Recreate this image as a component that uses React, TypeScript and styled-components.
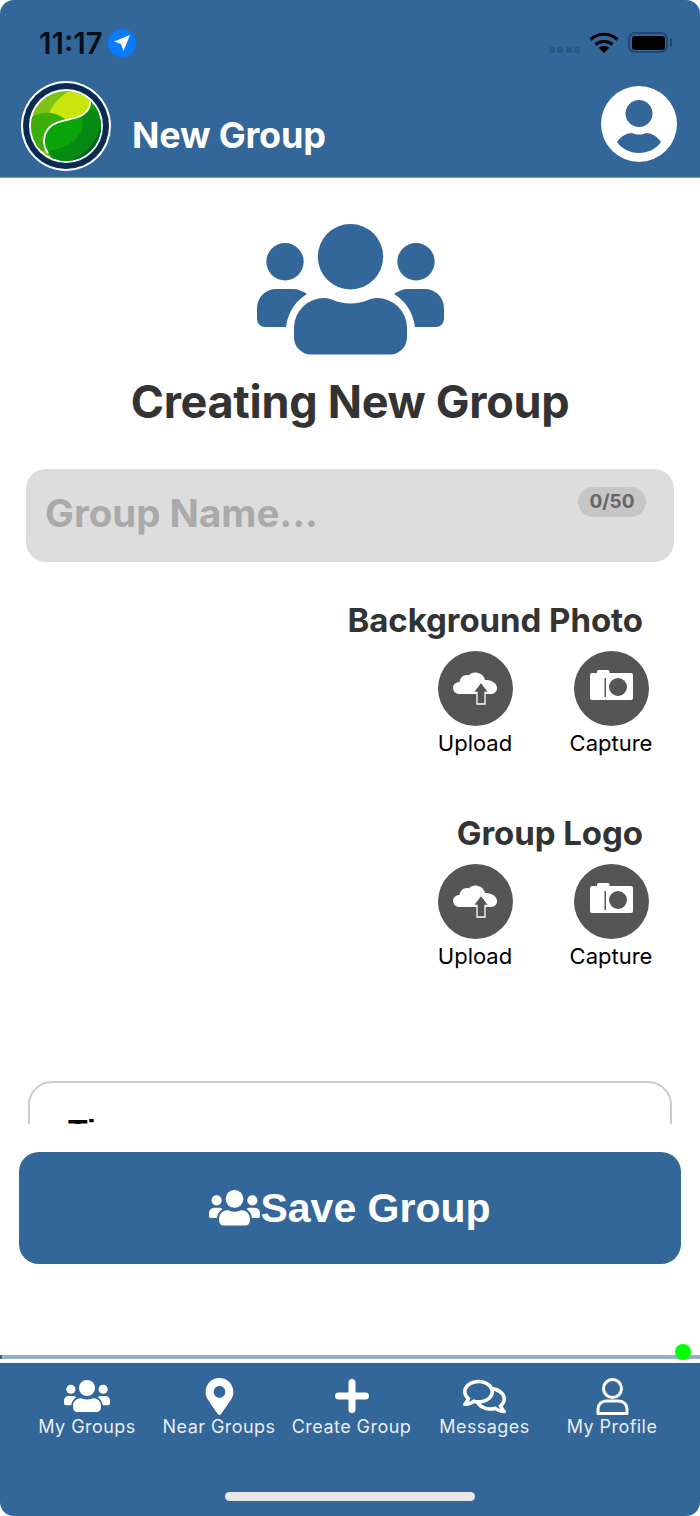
import * as React from 'react';
import styled, { createGlobalStyle } from 'styled-components';
import { FaMapMarkerAlt, FaRegComments } from 'react-icons/fa';

const BRAND = '#336699';

const GlobalStyle = createGlobalStyle`
  html, body {
    margin: 0;
    padding: 0;
    background: #fff;
  }
  body {
    font-family: Inter, "Liberation Sans", sans-serif;
  }
`;

const Screen = styled.div`
  position: relative;
  width: 700px;
  height: 1516px;
  overflow: hidden;
  border-radius: 14px;
  background: #fff;
  display: flex;
  flex-direction: column;
`;

const Header = styled.header`
  height: 178px;
  box-sizing: border-box;
  flex-shrink: 0;
  background: ${BRAND};
  border-bottom: 1px solid #7fa3c6;
  display: flex;
  flex-direction: column;
`;

const StatusBar = styled.div`
  height: 81px;
  flex-shrink: 0;
  box-sizing: border-box;
  padding: 28px 32px 0 39px;
  display: flex;
  align-items: flex-start;
`;

const Clock = styled.span`
  font-size: 29.5px;
  line-height: 30px;
  font-weight: 600;
  color: #05101c;
`;

const LocationBadge = styled.span`
  width: 28px;
  height: 28px;
  margin: 1px 0 0 5px;
  border-radius: 50%;
  background: #0a7aff;
  display: flex;
  align-items: center;
  justify-content: center;
`;

const StatusIcons = styled.div`
  margin-left: auto;
  display: flex;
  align-items: center;
  height: 30px;
`;

const SignalDots = styled.div`
  display: flex;
  gap: 2.5px;
  margin: 14px 9px 0 0;
`;

const SignalDot = styled.span`
  width: 6px;
  height: 6px;
  border-radius: 2px;
  background: #2b5883;
`;

const Battery = styled.div`
  position: relative;
  width: 40px;
  height: 21px;
  margin: -1px 0 0 9px;
  box-sizing: border-box;
  border: 2px solid #1f4770;
  border-radius: 7px;
  padding: 1.5px;
  &::after {
    content: '';
    position: absolute;
    right: -6px;
    top: 4px;
    width: 2px;
    height: 9px;
    border-radius: 0 2px 2px 0;
    background: #1f4770;
  }
`;

const BatteryFill = styled.div`
  height: 100%;
  background: #000;
  border-radius: 3px;
`;

const NavRow = styled.div`
  display: flex;
  align-items: flex-start;
  padding: 0 23px 0 21px;
`;

const Title = styled.h1`
  margin: 32px 0 0 21px;
  font-size: 36px;
  line-height: 44px;
  font-weight: 700;
  color: #fff;
  letter-spacing: -0.2px;
`;

const AvatarButton = styled.div`
  margin: 5px 0 0 auto;
  width: 76px;
  height: 76px;
`;

const Scroll = styled.main`
  height: 946px;
  flex-shrink: 0;
  overflow: hidden;
  display: flex;
  flex-direction: column;
  & > * {
    flex-shrink: 0;
  }
`;

const HeroIcon = styled.div`
  margin-top: 46px;
  display: flex;
  justify-content: center;
`;

const Heading = styled.h2`
  margin: 20px 0 0;
  text-align: center;
  font-size: 45px;
  line-height: 54px;
  font-weight: 700;
  color: #333;
  letter-spacing: -0.3px;
`;

const NameField = styled.div`
  position: relative;
  margin: 40px 26px 0;
  height: 93px;
  box-sizing: border-box;
  padding: 21px 19px 0;
  background: #ddd;
  border-radius: 20px;
  font-size: 38.5px;
  line-height: 46px;
  font-weight: 700;
  color: #aaa;
  font-feature-settings: 'calt' 0;
`;

const Counter = styled.span`
  position: absolute;
  top: 18px;
  right: 28px;
  width: 68px;
  height: 30px;
  border-radius: 15px;
  background: #c6c6c6;
  color: #666;
  font-size: 19px;
  line-height: 30px;
  font-weight: 700;
  text-align: center;
`;

const PhotoSection = styled.section<{ $top: number }>`
  margin-top: ${(p) => p.$top}px;
  padding-right: 21px;
  display: flex;
  flex-direction: column;
  align-items: flex-end;
`;

const SectionTitle = styled.h3`
  margin: 0 36px 0 0;
  font-size: 33px;
  line-height: 40px;
  font-weight: 700;
  color: #333;
  letter-spacing: -0.05px;
`;

const PhotoActions = styled.div`
  margin-top: 11px;
  display: grid;
  grid-template-columns: 136px 136px;
`;

const PhotoAction = styled.div`
  display: flex;
  flex-direction: column;
  align-items: center;
`;

const ActionCircle = styled.div`
  width: 75px;
  height: 75px;
`;

const ActionLabel = styled.span`
  margin-top: 4px;
  font-size: 22px;
  line-height: 26px;
  color: #000;
`;

const DescriptionBox = styled.div`
  margin: 112px 28px 0;
  height: 120px;
  box-sizing: border-box;
  border: 2px solid #ccc;
  border-radius: 24px;
  padding: 30px 38px 0;
  font-family: "Liberation Sans", sans-serif;
  font-size: 32px;
  line-height: 36px;
  font-weight: 700;
  color: #000;
`;

const SaveButton = styled.button`
  margin: 28px 19px 0;
  height: 112px;
  flex-shrink: 0;
  border: 0;
  border-radius: 20px;
  background: ${BRAND};
  color: #fff;
  display: flex;
  align-items: center;
  justify-content: center;
  font-family: "Liberation Sans", sans-serif;
  font-size: 41px;
  font-weight: 700;
`;

const ProgressTrack = styled.div`
  margin-top: 91px;
  height: 4px;
  flex-shrink: 0;
  background: #93aec8;
`;

const ProgressFill = styled.div`
  width: 2px;
  height: 100%;
  background: ${BRAND};
`;

const StatusDot = styled.span`
  position: absolute;
  left: 675px;
  top: 1344px;
  width: 16px;
  height: 16px;
  border-radius: 50%;
  background: #00ff00;
`;

const TabBar = styled.nav`
  margin-top: 4px;
  flex: 1;
  position: relative;
  background: ${BRAND};
  padding: 14px 0 0 21px;
  display: grid;
  grid-template-columns: 132px 132px 133px 133px 122px;
  align-content: start;
`;

const Tab = styled.div`
  display: flex;
  flex-direction: column;
  align-items: center;
`;

const TabIcon = styled.div`
  height: 38px;
  display: flex;
  align-items: center;
  justify-content: center;
  color: #fff;
`;

const TabLabel = styled.span`
  font-size: 18px;
  line-height: 24px;
  color: #eaeef3;
  letter-spacing: 0.45px;
  white-space: nowrap;
`;

const HomeIndicator = styled.span`
  position: absolute;
  left: 225px;
  bottom: 15px;
  width: 250px;
  height: 9px;
  border-radius: 5px;
  background: #e8e8e8;
`;

// three people, same drawing for the hero, the save button and the tab
const UsersIcon = ({ width, color = '#fff' }: { width: number; color?: string }): JSX.Element => (
  <svg width={width} height={(width * 131) / 187} viewBox="0 0 187 131" fill={color}>
    <circle cx="93.5" cy="32.7" r="32.7" />
    <circle cx="28" cy="37.7" r="18.7" />
    <circle cx="159" cy="37.7" r="18.7" />
    <path d="M37 113V103A30 30 0 0 1 67 74C71 74 74 75 76 76C81 78 87 79.5 93.5 79.5C100 79.5 106 78 111 76C113 75 116 74 120 74A30 30 0 0 1 150 103V113A17 17 0 0 1 133 130.5H54A17 17 0 0 1 37 113Z" />
    <path d="M0 95V84A19 19 0 0 1 19 65H36C41 65 46 67 50 70C40 76 31 87 29 103H8A8 8 0 0 1 0 95Z" />
    <path d="M187 95V84A19 19 0 0 0 168 65H151C146 65 141 67 137 70C147 76 156 87 158 103H179A8 8 0 0 0 187 95Z" />
  </svg>
);

const Logo = (): JSX.Element => (
  <svg width="90" height="90" viewBox="0 0 90 90" style={{ flexShrink: 0 }}>
    <defs>
      <clipPath id="ball">
        <circle cx="45" cy="45" r="35" />
      </clipPath>
    </defs>
    <circle cx="45" cy="45" r="45" fill="#fff" />
    <circle cx="45" cy="45" r="43" fill="#0b2c52" />
    <circle cx="45" cy="45" r="37" fill="#fff" />
    <g clipPath="url(#ball)">
      <rect width="90" height="90" fill="#7cc40f" />
      <path d="M27 36C30 24 40 14 52 8H75V31L54 38L37 41Z" fill="#c9e60f" />
      <path d="M8 38C20 29 35 30 45 39L22 70L5 62Z" fill="#3cae08" />
      <path d="M69 20C70 29 62 35 54 37C46 39.5 37 39 30 45C23 51 20 62 27 72L40 90H90V20Z" fill="#0aa50a" />
      <path d="M60 34C66 48 56 66 27 70L40 90H90V20Z" fill="#078a14" />
      <path d="M79 46C76 60 66 72 50 80L90 90V50Z" fill="#05602c" />
      <path d="M69 20C70 29 62 35 54 37C46 39.5 37 39 30 45C23 51 20 62 27 72" fill="none" stroke="#fff" strokeWidth="1.8" />
    </g>
  </svg>
);

const ProfileAvatar = (): JSX.Element => (
  <svg width="76" height="76" viewBox="0 0 76 76">
    <circle cx="38" cy="38" r="38" fill="#fff" />
    <circle cx="38" cy="27.5" r="13.5" fill={BRAND} />
    <path d="M16 56C20 50 26 47 31 47C33 48 36 48.5 38 48.5C40 48.5 43 48 45 47C50 47 56 50 60 56C55 63 47 67 38 67C29 67 21 63 16 56Z" fill={BRAND} />
  </svg>
);

const UploadGlyph = (): JSX.Element => (
  <svg width="75" height="75" viewBox="0 0 75 75">
    <circle cx="37.5" cy="37.5" r="37.5" fill="#555" />
    <path d="M21 43A6 6 0 0 1 15 37C15 33.5 18 31 21.5 31C22 26 27 23 31 24.5C33 21.5 37 21 40 22C44 23 46.5 26 47 29C48 28.8 49 29 50 29.3C55 30 59 33 59 37C59 41 56 43 52 43Z" fill="#fff" />
    <path d="M43 31L51 41.5H47V53H39V41.5H35Z" fill="#555" stroke="#fff" strokeWidth="1.3" />
  </svg>
);

const CaptureGlyph = (): JSX.Element => (
  <svg width="75" height="75" viewBox="0 0 75 75">
    <circle cx="37.5" cy="37.5" r="37.5" fill="#555" />
    <path d="M18 22H23V20.5Q23 19 24.5 19H34Q35.5 19 35.5 20.5V22H57Q59 22 59 24V47Q59 49 57 49H18Q16 49 16 47V24Q16 22 18 22Z" fill="#fff" />
    <circle cx="44" cy="36" r="9" fill="#555" />
    <rect x="30.5" y="27" width="1.5" height="19" fill="#555" />
  </svg>
);

const Wifi = (): JSX.Element => (
  <svg width="30" height="22" viewBox="0 0 30 22" fill="none" stroke="#000" strokeWidth="3.2">
    <path d="M1.5 7.5C9 0.5 21 0.5 28.5 7.5" />
    <path d="M6.5 12.5C11 8.5 19 8.5 23.5 12.5" />
    <path d="M15 21L9.8 15.7C12.5 13.3 17.5 13.3 20.2 15.7Z" fill="#000" stroke="none" />
  </svg>
);

const PlusIcon = (): JSX.Element => (
  <svg width="34" height="34" viewBox="0 0 34 34" stroke="#fff" strokeWidth="7" strokeLinecap="round">
    <path d="M17 3.5V30.5M3.5 17H30.5" />
  </svg>
);

const ProfileIcon = (): JSX.Element => (
  <svg width="34" height="37" viewBox="0 0 34 37" fill="none" stroke="#fff" strokeWidth="3">
    <circle cx="17.5" cy="10.5" r="9" />
    <path d="M3 35.5V31C3 26 7 23 11 23H24C28 23 32 26 32 31V35.5Z" strokeLinejoin="round" />
  </svg>
);

const PhotoPicker = ({ title, top }: { title: string; top: number }): JSX.Element => (
  <PhotoSection $top={top}>
    <SectionTitle>{title}</SectionTitle>
    <PhotoActions>
      <PhotoAction>
        <ActionCircle>
          <UploadGlyph />
        </ActionCircle>
        <ActionLabel>Upload</ActionLabel>
      </PhotoAction>
      <PhotoAction>
        <ActionCircle>
          <CaptureGlyph />
        </ActionCircle>
        <ActionLabel>Capture</ActionLabel>
      </PhotoAction>
    </PhotoActions>
  </PhotoSection>
);

const tabs = [
  { label: 'My Groups', icon: <UsersIcon width={46} /> },
  { label: 'Near Groups', icon: <FaMapMarkerAlt size={37} /> },
  { label: 'Create Group', icon: <PlusIcon /> },
  { label: 'Messages', icon: <FaRegComments size={43} /> },
  { label: 'My Profile', icon: <ProfileIcon /> },
];

const App = (): React.ReactElement => {
  return (
    <Screen>
      <GlobalStyle />
      <Header>
        <StatusBar>
          <Clock>11:17</Clock>
          <LocationBadge>
            <svg width="18" height="18" viewBox="0 0 18 18" fill="#fff">
              <path d="M17 1L10.5 17L8 10L1 7.5Z" />
            </svg>
          </LocationBadge>
          <StatusIcons>
            <SignalDots>
              <SignalDot />
              <SignalDot />
              <SignalDot />
              <SignalDot />
            </SignalDots>
            <Wifi />
            <Battery>
              <BatteryFill />
            </Battery>
          </StatusIcons>
        </StatusBar>
        <NavRow>
          <Logo />
          <Title>New Group</Title>
          <AvatarButton>
            <ProfileAvatar />
          </AvatarButton>
        </NavRow>
      </Header>

      <Scroll>
        <HeroIcon>
          <UsersIcon width={187} color={BRAND} />
        </HeroIcon>
        <Heading>Creating New Group</Heading>
        <NameField>
          Group Name...
          <Counter>0/50</Counter>
        </NameField>
        <PhotoPicker title="Background Photo" top={38} />
        <PhotoPicker title="Group Logo" top={57} />
        <DescriptionBox>Ti</DescriptionBox>
      </Scroll>

      <SaveButton>
        <UsersIcon width={51} />
        Save Group
      </SaveButton>

      <ProgressTrack>
        <ProgressFill />
      </ProgressTrack>
      <StatusDot />

      <TabBar>
        {tabs.map((tab) => (
          <Tab key={tab.label}>
            <TabIcon>{tab.icon}</TabIcon>
            <TabLabel>{tab.label}</TabLabel>
          </Tab>
        ))}
        <HomeIndicator />
      </TabBar>
    </Screen>
  );
};

export default App;
